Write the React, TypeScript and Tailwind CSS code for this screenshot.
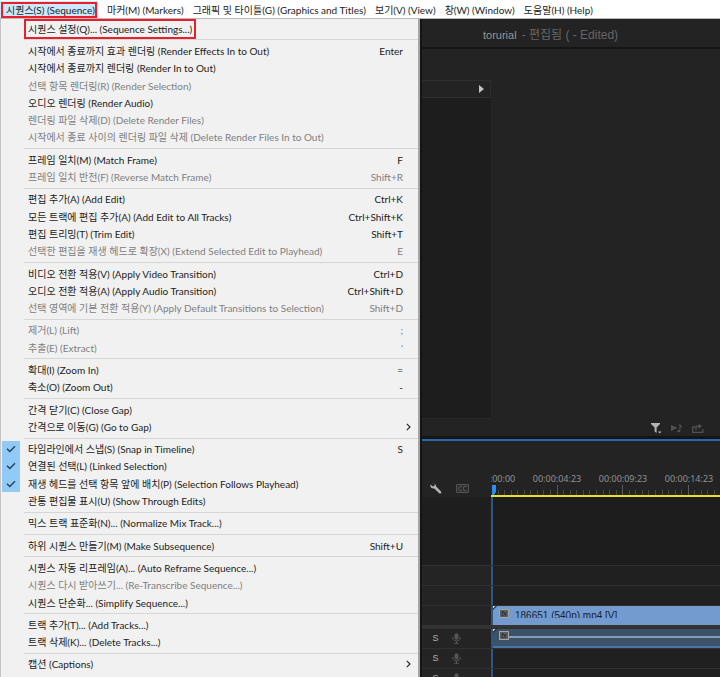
import React from "react";

type Item = { label: string; keys?: string; off?: boolean; checked?: boolean; sub?: boolean; marked?: boolean };

const menus = [
  "마커(M) (Markers)",
  "그래픽 및 타이틀(G) (Graphics and Titles)",
  "보기(V) (View)",
  "창(W) (Window)",
  "도움말(H) (Help)",
];

const groups: Item[][] = [
  [{ label: "시퀀스 설정(Q)... (Sequence Settings...)", marked: true }],
  [
    { label: "시작에서 종료까지 효과 렌더링 (Render Effects In to Out)", keys: "Enter" },
    { label: "시작에서 종료까지 렌더링 (Render In to Out)" },
    { label: "선택 항목 렌더링(R) (Render Selection)", off: true },
    { label: "오디오 렌더링 (Render Audio)" },
    { label: "렌더링 파일 삭제(D) (Delete Render Files)", off: true },
    { label: "시작에서 종료 사이의 렌더링 파일 삭제 (Delete Render Files In to Out)", off: true },
  ],
  [
    { label: "프레임 일치(M) (Match Frame)", keys: "F" },
    { label: "프레임 일치 반전(F) (Reverse Match Frame)", keys: "Shift+R", off: true },
  ],
  [
    { label: "편집 추가(A) (Add Edit)", keys: "Ctrl+K" },
    { label: "모든 트랙에 편집 추가(A) (Add Edit to All Tracks)", keys: "Ctrl+Shift+K" },
    { label: "편집 트리밍(T) (Trim Edit)", keys: "Shift+T" },
    { label: "선택한 편집을 재생 헤드로 확장(X) (Extend Selected Edit to Playhead)", keys: "E", off: true },
  ],
  [
    { label: "비디오 전환 적용(V) (Apply Video Transition)", keys: "Ctrl+D" },
    { label: "오디오 전환 적용(A) (Apply Audio Transition)", keys: "Ctrl+Shift+D" },
    { label: "선택 영역에 기본 전환 적용(Y) (Apply Default Transitions to Selection)", keys: "Shift+D", off: true },
  ],
  [
    { label: "제거(L) (Lift)", keys: ";", off: true },
    { label: "추출(E) (Extract)", keys: "'", off: true },
  ],
  [
    { label: "확대(I) (Zoom In)", keys: "=" },
    { label: "축소(O) (Zoom Out)", keys: "-" },
  ],
  [{ label: "간격 닫기(C) (Close Gap)" }, { label: "간격으로 이동(G) (Go to Gap)", sub: true }],
  [
    { label: "타임라인에서 스냅(S) (Snap in Timeline)", keys: "S", checked: true },
    { label: "연결된 선택(L) (Linked Selection)", checked: true },
    { label: "재생 헤드를 선택 항목 앞에 배치(P) (Selection Follows Playhead)", checked: true },
    { label: "관통 편집물 표시(U) (Show Through Edits)" },
  ],
  [{ label: "믹스 트랙 표준화(N)... (Normalize Mix Track...)" }],
  [{ label: "하위 시퀀스 만들기(M) (Make Subsequence)", keys: "Shift+U" }],
  [
    { label: "시퀀스 자동 리프레임(A)... (Auto Reframe Sequence...)" },
    { label: "시퀀스 다시 받아쓰기... (Re-Transcribe Sequence...)", off: true },
    { label: "시퀀스 단순화... (Simplify Sequence...)" },
  ],
  [{ label: "트랙 추가(T)... (Add Tracks...)" }, { label: "트랙 삭제(K)... (Delete Tracks...)" }],
  [{ label: "캡션 (Captions)", sub: true }],
];

function MenuItem({ item }: { item: Item }) {
  return (
    <button
      type="button"
      role="menuitem"
      disabled={item.off}
      className={`flex min-h-0 w-full flex-1 items-center text-left ${item.off ? "text-[#808080]" : "text-[#1c1c1c]"}`}
    >
      <span className={`flex w-[18px] shrink-0 items-center justify-center self-stretch ${item.checked ? "bg-[#91c9f7]" : ""}`}>
        {item.checked && (
          <svg width="10" height="8" viewBox="0 0 10 8" fill="none" stroke="#24435c" strokeWidth="1.4" aria-hidden="true">
            <path d="M1 3.8 3.8 6.5 9 1.2" />
          </svg>
        )}
      </span>
      <span
        className={`ml-[5px] whitespace-nowrap px-[3px] ${item.marked ? "-my-px flex h-[18px] items-center outline-2 -outline-offset-1 outline-[#e8202c]" : ""}`}
      >
        {item.label}
      </span>
      {item.keys && <span className="ml-auto pr-[15px]">{item.keys}</span>}
      {item.sub && (
        <svg className="ml-auto mr-[7px]" width="5" height="8" viewBox="0 0 5 8" fill="none" stroke="#222" strokeWidth="1.1" aria-hidden="true">
          <path d="M.8.8 4 4 .8 7.2" />
        </svg>
      )}
    </button>
  );
}

function SequenceMenu() {
  return (
    <div role="menu" className="flex w-[420px] shrink-0 flex-col border-l border-r-2 border-l-[#c4c4c4] border-r-[#a5a5a5] bg-[#f1f1f1] pb-1 pl-px pt-px">
      {groups.map((group, g) => (
        <React.Fragment key={g}>
          {g > 0 && (
            <div role="separator" className="flex h-[5px] shrink-0 items-center pl-[22px]">
              <div className="h-px w-full bg-[#d6d6d6]" />
            </div>
          )}
          {group.map((item) => (
            <MenuItem key={item.label} item={item} />
          ))}
        </React.Fragment>
      ))}
    </div>
  );
}

function ProgramPanel() {
  return (
    <section className="flex flex-1 flex-col border-b-[3px] border-t-2 border-[#151515] bg-[#232323]">
      <div className="h-[31px] shrink-0" />
      <div className="flex w-[69px] flex-1 flex-col">
        <div className="flex h-[18px] shrink-0 items-center justify-end border border-l-0 border-[#2e2e30] pr-[6px]">
          <svg width="5" height="8" viewBox="0 0 5 8" fill="#c4c4c4" aria-hidden="true">
            <path d="M0 0 5 4 0 8Z" />
          </svg>
        </div>
        <div className="flex-1 border-b border-[#2a2a30] bg-[#1d1d1d]" />
      </div>
      <div className="flex h-[17px] shrink-0 items-center justify-end gap-[9px] pr-4">
        <button type="button" aria-label="Filter">
          <svg width="11" height="12" viewBox="0 0 11 12" fill="#b5b5b5" aria-hidden="true">
            <path d="M0 1H9V2L5.6 5.6V11L3.6 9.4V5.6L0 2ZM7 9.5H10.6L8.8 11.5Z" />
          </svg>
        </button>
        <button type="button" aria-label="Play audio">
          <svg width="12" height="10" viewBox="0 0 12 10" fill="#515151" aria-hidden="true">
            <path d="M0 2 6.5 5 0 8ZM8.4 1H9.4C9.5 3 12 3.4 11 6C10.9 4.5 10 4 9.4 4V8C9 9.7 6.2 9.8 6.3 8.3C6.5 7.2 7.6 6.9 8.4 7.2Z" />
          </svg>
        </button>
        <button type="button" aria-label="Export">
          <svg width="12" height="10" viewBox="0 0 12 10" fill="none" stroke="#515151" aria-hidden="true">
            <path d="M3 4H.7V9.3H10.8V6" strokeWidth="1.3" />
            <path d="M4 7V3.4H7" strokeWidth="1.3" />
            <path d="M6.5.5 10 3.2 6.5 6Z" fill="#515151" stroke="none" />
          </svg>
        </button>
      </div>
    </section>
  );
}

const times = ["00:00:00:00", "00:00:04:23", "00:00:09:23", "00:00:14:23"];
const ticks = Array.from({ length: 120 }, (_, i) => i + 1);

function Ruler() {
  return (
    <div className="flex min-w-0 flex-1 flex-col justify-end overflow-hidden border-b-2 border-[#e6e02a]">
      <div className="-ml-[33px] flex font-['Noto_Sans',sans-serif] text-[9px] leading-[12px] text-[#929292]">
        {times.map((t) => (
          <span key={t} className="w-[66px] shrink-0 text-center">
            {t}
          </span>
        ))}
      </div>
      <svg className="block h-[10px] w-full" aria-hidden="true">
        {ticks.map((i) => (
          <rect key={i} x={Math.round(i * 6.56)} y={i % 10 === 0 ? 0 : 5} width="1" height={i % 10 === 0 ? 10 : 5} fill={i % 10 === 0 ? "#5a5a5a" : "#484848"} />
        ))}
        <path d="M1 0H5V7L3 10H1Z" fill="#2f8cf0" />
      </svg>
    </div>
  );
}

function FxBadge() {
  return (
    <span className="ml-[6px] flex h-[9px] w-[10px] shrink-0 items-center justify-center border border-[#a5a5a0] bg-[#5b5f62] font-['Liberation_Sans',sans-serif] text-[7px] italic leading-none text-[#1c1c1c]">
      fx
    </span>
  );
}

function Corner() {
  return (
    <svg className="absolute left-0 top-0" width="4" height="4" viewBox="0 0 4 4" aria-hidden="true">
      <path d="M0 0H4L0 4Z" fill="#222" />
      <path d="M0 0H2.5L0 2.5Z" fill="#ddd" />
    </svg>
  );
}

function Head({ audio }: { audio?: boolean }) {
  return (
    <div className="flex w-[69px] shrink-0 items-center gap-[13px] bg-[#242425] pl-[10px]">
      {audio && (
        <>
          <button type="button" className="w-[7px] font-['Liberation_Sans',sans-serif] text-[9px] leading-none text-[#b2b2b2]">
            S
          </button>
          <button type="button" aria-label="Voice-over record">
            <svg width="9" height="11" viewBox="0 0 9 11" fill="none" stroke="#555" aria-hidden="true">
              <rect x="2.5" y=".3" width="4" height="6.4" rx="2" fill="#555" stroke="none" />
              <path d="M.8 4V5C.8 9 8.2 9 8.2 5V4M4.5 8V10.4M2.4 10.4H6.6" />
            </svg>
          </button>
        </>
      )}
    </div>
  );
}

function Track({ audio, children }: { audio?: boolean; children?: React.ReactNode }) {
  return (
    <div className="flex h-5 shrink-0 border-t border-[#303030]">
      <Head audio={audio} />
      <div className="flex min-w-0 flex-1 border-l-2 border-[#2d5683] bg-[#202020]">{children}</div>
    </div>
  );
}

function Timeline() {
  return (
    <section className="flex h-[238px] shrink-0 flex-col overflow-hidden border-t-2 border-[#2867ad] bg-[#232323]">
      <div className="flex h-14 shrink-0">
        <div className="flex w-[69px] shrink-0 items-end gap-[14px] pb-[3px] pl-2">
          <button type="button" aria-label="Timeline settings">
            <svg width="12" height="12" viewBox="0 0 12 12" fill="#b4b4b4" aria-hidden="true">
              <path d="M2.6.4 4.8 2.6 4.3 4.1 2.8 4.6.5 2.4C-.2 4.8 1.6 6.9 4.3 6.4L9.2 11.3C10.2 12.2 12.1 10.6 11 9.4L6.2 4.6C6.7 2-.1-.5 2.6.4Z" />
            </svg>
          </button>
          <button type="button" aria-label="Captions" className="pb-px">
            <svg width="13" height="9" viewBox="0 0 13 9" fill="none" stroke="#555" aria-hidden="true">
              <rect x=".6" y=".6" width="11.8" height="7.8" rx="1" strokeWidth="1.2" />
              <path d="M6 3.3C5.4 2 2.8 2.2 2.8 4.5S5.4 7 6 5.7M10.4 3.3C9.8 2 7.2 2.2 7.2 4.5S9.8 7 10.4 5.7" strokeWidth="1.2" />
            </svg>
          </button>
        </div>
        <Ruler />
      </div>
      <div className="flex min-h-0 flex-1">
        <div className="w-[69px] shrink-0 bg-[#1e1e1e]" />
        <div className="flex-1 border-l-2 border-[#2d5683] bg-[#1d1d1d]" />
      </div>
      <Track />
      <Track />
      <Track>
        <div className="relative flex flex-1 items-start overflow-hidden bg-[#739bcf] pt-[3px]">
          <Corner />
          <FxBadge />
          <span className="ml-[6px] h-[9px] overflow-hidden whitespace-nowrap font-['Liberation_Sans',sans-serif] text-[10px] leading-[13px] text-[#182333]">
            186651 (540p).mp4 [V]
          </span>
        </div>
      </Track>
      <div className="h-[3px] shrink-0 bg-[#343434]" />
      <Track audio>
        <div className="relative flex flex-1 items-start border-b-2 border-[#4a74a8] bg-[#3c5269] pt-[2px]">
          <Corner />
          <FxBadge />
          <div className="mt-[5px] h-[2px] flex-1 bg-[#849bb9]" />
        </div>
      </Track>
      <Track audio />
      <div className="flex h-[9px] shrink-0 flex-col overflow-hidden">
        <Track audio />
      </div>
    </section>
  );
}

export default function App() {
  return (
    <div className="flex h-screen flex-col overflow-hidden bg-[#1a1a1a] font-[Lato,'Noto_Sans_CJK_KR',sans-serif] text-[10px] leading-[14px]">
      <nav className="flex h-[19px] shrink-0 items-center gap-[9px] border-b border-[#b8b8b8] bg-white pt-px text-[#1c1c1c]">
        <button type="button" className="h-full bg-[#cce8ff] pl-px pr-px">
          <span className="flex h-[16px] items-center whitespace-nowrap border-2 border-[#e8202c] pl-[3px]">시퀀스(S) (Sequence)</span>
        </button>
        {menus.map((m) => (
          <button key={m} type="button" className="whitespace-nowrap">
            {m}
          </button>
        ))}
      </nav>
      <div className="flex min-h-0 flex-1">
        <SequenceMenu />
        <main className="flex min-w-0 flex-1 flex-col border-l-2 border-[#151515]">
          <header className="flex h-7 shrink-0 items-center bg-[#232323] pl-[61px] pt-[3px] font-['Liberation_Sans','Noto_Sans_CJK_KR',sans-serif]">
            <h1 className="flex items-baseline gap-[5px] text-[12px] text-[#666]">
              <span className="text-[11px] text-[#959595]">torurial</span>
              <span>- 편집됨 ( - Edited)</span>
            </h1>
          </header>
          <ProgramPanel />
          <Timeline />
        </main>
      </div>
    </div>
  );
}
